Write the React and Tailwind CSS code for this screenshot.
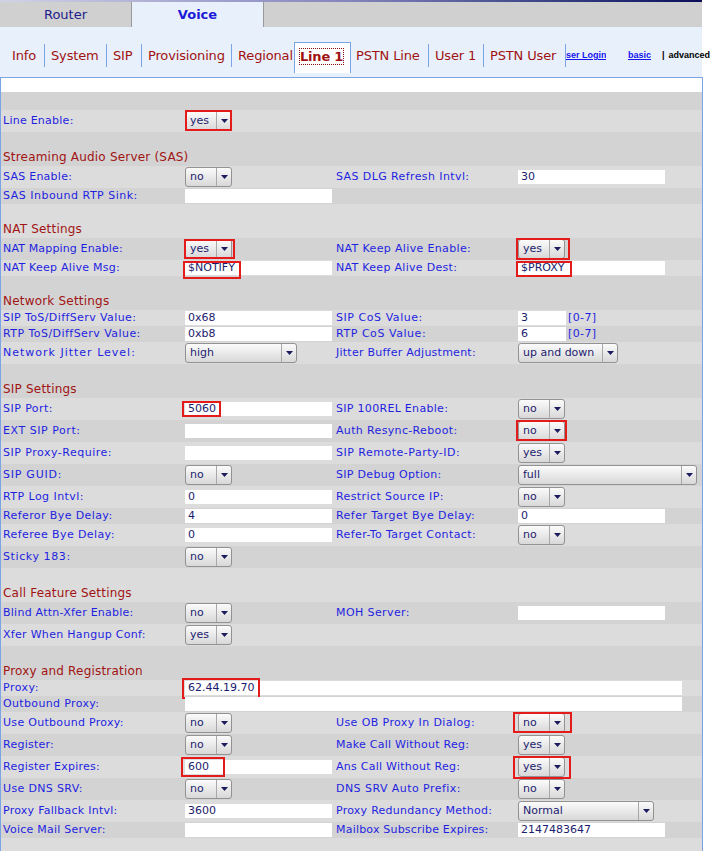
import React from 'react';

const S = (value, w = 'w-[47px]') => ({ type: 'select', value, w });
const I = (value, w = 'w-[147px]') => ({ type: 'input', value, w });

// rows of the Line 1 page, in order (t1/t2 = letter spacing of the labels)
const rows = [
    { blank: 'h-[18px]' },
    { l1: 'Line Enable:', v1: S('yes'), m1: [0, 0, 47, 21] },
    { head: 'Streaming Audio Server (SAS)' },
    { l1: 'SAS Enable:', v1: S('no'), l2: 'SAS DLG Refresh Intvl:', t2: 'tracking-[0.4px]', v2: I('30') },
    { l1: 'SAS Inbound RTP Sink:', t1: 'tracking-[0.5px]', v1: I('') },
    { head: 'NAT Settings' },
    { l1: 'NAT Mapping Enable:', t1: 'tracking-[0.15px]', v1: S('yes'), m1: [-1, 1, 51, 20], l2: 'NAT Keep Alive Enable:', t2: 'tracking-[0.35px]', v2: S('yes'), m2: [-2, 0, 54, 22] },
    { l1: 'NAT Keep Alive Msg:', v1: I('$NOTIFY'), m1: [-2, 1, 58, 18], l2: 'NAT Keep Alive Dest:', t2: 'tracking-[0.3px]', v2: I('$PROXY'), m2: [-2, 1, 56, 16] },
    { head: 'Network Settings' },
    { l1: 'SIP ToS/DiffServ Value:', t1: 'tracking-[0.4px]', v1: I('0x68'), l2: 'SIP CoS Value:', t2: 'tracking-[0.55px]', v2: I('3', 'w-[48px]'), note: '[0-7]' },
    { l1: 'RTP ToS/DiffServ Value:', t1: 'tracking-[0.45px]', v1: I('0xb8'), l2: 'RTP CoS Value:', t2: 'tracking-[0.55px]', v2: I('6', 'w-[48px]'), note: '[0-7]' },
    { l1: 'Network Jitter Level:', t1: 'tracking-[1px]', v1: S('high', 'w-[112px]'), l2: 'Jitter Buffer Adjustment:', v2: S('up and down', 'w-[100px]') },
    { head: 'SIP Settings' },
    { l1: 'SIP Port:', t1: 'tracking-[0.45px]', v1: I('5060'), m1: [-3, 3, 39, 16], l2: 'SIP 100REL Enable:', t2: 'tracking-[0.3px]', v2: S('no') },
    { l1: 'EXT SIP Port:', t1: 'tracking-[0.55px]', v1: I(''), l2: 'Auth Resync-Reboot:', t2: 'tracking-[0.35px]', v2: S('no'), m2: [-2, 0, 51, 21] },
    { l1: 'SIP Proxy-Require:', t1: 'tracking-[0.5px]', v1: I(''), l2: 'SIP Remote-Party-ID:', t2: 'tracking-[0.5px]', v2: S('yes') },
    { l1: 'SIP GUID:', t1: 'tracking-[0.75px]', v1: S('no'), l2: 'SIP Debug Option:', t2: 'tracking-[0.3px]', v2: S('full', 'w-[179px]') },
    { l1: 'RTP Log Intvl:', t1: 'tracking-[0.45px]', v1: I('0'), l2: 'Restrict Source IP:', t2: 'tracking-[0.4px]', v2: S('no') },
    { l1: 'Referor Bye Delay:', t1: 'tracking-[0.4px]', v1: I('4'), l2: 'Refer Target Bye Delay:', t2: 'tracking-[0.45px]', v2: I('0') },
    { l1: 'Referee Bye Delay:', t1: 'tracking-[0.4px]', v1: I('0'), l2: 'Refer-To Target Contact:', t2: 'tracking-[0.4px]', v2: S('no') },
    { l1: 'Sticky 183:', t1: 'tracking-[0.6px]', v1: S('no') },
    { head: 'Call Feature Settings' },
    { l1: 'Blind Attn-Xfer Enable:', v1: S('no'), l2: 'MOH Server:', t2: 'tracking-[0.4px]', v2: I('') },
    { l1: 'Xfer When Hangup Conf:', t1: 'tracking-[0.3px]', v1: S('yes') },
    { head: 'Proxy and Registration' },
    { l1: 'Proxy:', t1: 'tracking-[0.5px]', wide: I('62.44.19.70', 'w-[497px]'), m1: [-3, -2, 78, 21] },
    { l1: 'Outbound Proxy:', t1: 'tracking-[0.35px]', wide: I('', 'w-[497px]') },
    { l1: 'Use Outbound Proxy:', t1: 'tracking-[0.3px]', v1: S('no'), l2: 'Use OB Proxy In Dialog:', t2: 'tracking-[0.4px]', v2: S('no'), m2: [-5, 0, 59, 21] },
    { l1: 'Register:', v1: S('no'), l2: 'Make Call Without Reg:', v2: S('yes') },
    { l1: 'Register Expires:', v1: I('600'), m1: [-4, 1, 44, 20], l2: 'Ans Call Without Reg:', v2: S('yes'), m2: [-5, 0, 58, 23] },
    { l1: 'Use DNS SRV:', t1: 'tracking-[0.35px]', v1: S('no'), l2: 'DNS SRV Auto Prefix:', t2: 'tracking-[0.45px]', v2: S('no') },
    { l1: 'Proxy Fallback Intvl:', v1: I('3600'), l2: 'Proxy Redundancy Method:', v2: S('Normal', 'w-[136px]') },
    { l1: 'Voice Mail Server:', v1: I(''), l2: 'Mailbox Subscribe Expires:', t2: 'tracking-[0.2px]', v2: I('2147483647') },
    { blank: 'h-[20px]' },
];

const Arrow = () => (
    <svg width="7" height="4" viewBox="0 0 7 4">
        <polygon points="0,0 7,0 3.5,4" fill="#1b1b5e" />
    </svg>
);

const Field = ({ field }) => {
    if (!field) return null;
    if (field.type === 'select') {
        return (
            <div className={`${field.w} flex h-[20px] shrink-0 rounded-[3px] border border-[#929292] bg-linear-to-b from-[#fbfbfb] to-[#d8d8d8]`}>
                <span className="flex-1 pl-[4px] text-[11px] leading-[18px] text-[#1c1c6e]">{field.value}</span>
                <span className="flex w-[15px] items-center justify-center border-l border-[#a8a8a8]">
                    <Arrow />
                </span>
            </div>
        );
    }
    return (
        <div className={`${field.w} h-[14px] shrink-0 bg-white pl-[3px] text-[11px] leading-[14px] text-[#1c1c6e]`}>{field.value}</div>
    );
};

const Mark = ({ box }) => {
    if (!box) return null;
    const [left, top, width, height] = box;
    return <div className="pointer-events-none absolute border-2 border-[#e41b1b]" style={{ left, top, width, height }} />;
};

const Row = ({ row, dark }) => {
    const bg = dark ? 'bg-[#d3d3d3]' : 'bg-[#dcdcdc]';

    if (row.blank) return <div className={`${bg} ${row.blank}`} />;

    if (row.head) {
        return (
            <div className={`${bg} flex h-[34px] items-end pl-[2px] text-[12px] leading-[18px] tracking-[0.2px] text-[#a11414]`}>
                {row.head}
            </div>
        );
    }

    const hasSelect = [row.v1, row.v2].some((f) => f && f.type === 'select');
    const label = 'flex items-center pl-[2px] text-[11px] text-[#1f1fe0] whitespace-nowrap';

    return (
        <div className={`${bg} grid grid-cols-[184px_149px_184px_183px] ${hasSelect ? 'h-[22px]' : 'h-[16px]'}`}>
            <div className={`${label} ${row.t1 || 'tracking-[0.25px]'}`}>{row.l1}</div>
            {row.wide ? (
                <div className="relative col-span-3 flex items-center">
                    <Field field={row.wide} />
                    <Mark box={row.m1} />
                </div>
            ) : (
                <>
                    <div className="relative flex items-center">
                        <Field field={row.v1} />
                        <Mark box={row.m1} />
                    </div>
                    <div className={`${label} ${row.t2 || 'tracking-[0.25px]'}`}>{row.l2}</div>
                    <div className="relative flex items-center">
                        <Field field={row.v2} />
                        {row.note && <span className="ml-[2px] text-[11px] tracking-[0.4px] text-[#1f1fe0]">{row.note}</span>}
                        <Mark box={row.m2} />
                    </div>
                </>
            )}
        </div>
    );
};

const tabs = [
    { name: 'Info', w: 'w-[39px]' },
    { name: 'System', w: 'w-[62px]' },
    { name: 'SIP', w: 'w-[35px]' },
    { name: 'Provisioning', w: 'w-[90px]' },
];

const tabsAfter = [
    { name: 'PSTN Line', w: 'w-[78px]', pad: 'pl-[5px]' },
    { name: 'User 1', w: 'w-[55px]', pad: 'pl-[6px]' },
    { name: 'PSTN User', w: 'w-[82px]', pad: 'pl-[6px]' },
];

const App = () => {
    return (
        <div className="min-h-[851px] w-[715px] overflow-hidden bg-white font-['DejaVu_Sans',Verdana,sans-serif]">
            {/* top strip */}
            <div className="h-[2px] w-[702px] bg-linear-to-r from-[#d2d2e6] via-[#8484bc] to-[#0c0c5a]" />

            {/* main tabs */}
            <div className="flex h-[25px] w-[702px] text-[13px] leading-[25px]">
                <div className="w-[132px] border-r border-[#9a9a9a] bg-[#d0d0d0] text-center text-[#20208a]">Router</div>
                <div className="w-[132px] border-r border-[#9a9a9a] bg-[#e8f0fb] text-center font-bold text-[#1a1ad8]">Voice</div>
                <div className="flex-1 bg-[#d0d0d0]" />
            </div>

            {/* sub tabs */}
            <div className="flex h-[50px] w-[702px] items-start overflow-visible whitespace-nowrap bg-[#e8f0fb] pl-[6px] pt-[15px] text-[13px] tracking-[-0.15px] text-[#a01212]">
                {tabs.map((t) => (
                    <div key={t.name} className={`${t.w} mt-[2px] flex h-[23px] shrink-0 items-center border-r border-[#7ba4e4] pl-[6px]`}>
                        {t.name}
                    </div>
                ))}
                <div className="mt-[2px] flex h-[23px] w-[62px] shrink-0 items-center pl-[6px]">Regional</div>
                <div className="h-[31px] w-[57px] shrink-0 border border-b-0 border-[#7ba4e4] bg-white pl-[5px] pt-[4px]">
                    <span className="font-bold leading-[16px] tracking-[-0.2px] outline-1 outline-dotted outline-[#8a1010]">Line 1</span>
                </div>
                {tabsAfter.map((t) => (
                    <div key={t.name} className={`${t.w} ${t.pad} mt-[2px] flex h-[23px] shrink-0 items-center border-r border-[#7ba4e4]`}>
                        {t.name}
                    </div>
                ))}
                <div className="mt-[2px] flex h-[23px] shrink-0 items-center font-['Liberation_Sans',Arial,sans-serif] text-[9px] font-bold tracking-normal">
                    <div className="w-[40px] shrink-0 overflow-hidden">
                        <a className="ml-[-6.5px] block text-[#1414f0] underline">User Login</a>
                    </div>
                    <a className="ml-[22px] text-[#1414f0] underline">basic</a>
                    <span className="ml-[11px] text-black">|</span>
                    <span className="ml-[4px] text-black">advanced</span>
                </div>
            </div>

            {/* settings */}
            <div className="w-[703px] border-x border-t border-[#7ba4e4]">
                <div className="h-[14px] bg-white" />
                {rows.map((row, i) => (
                    <Row key={i} row={row} dark={i % 2 === 0} />
                ))}
            </div>
        </div>
    );
};

export default App;
